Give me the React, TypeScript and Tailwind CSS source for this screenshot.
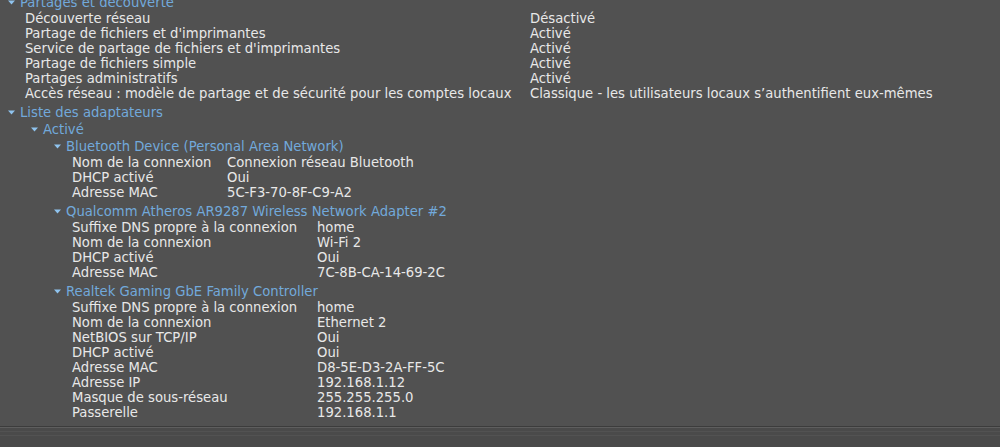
import React from "react";

const Arrow = () => (
  <svg width="7" height="5" viewBox="0 0 7 5" className="shrink-0">
    <path d="M0 0.5 L7 0.5 L3.5 4.5 Z" fill="#8fc3ee" />
  </svg>
);

const Header = ({ indent, text, gapTop }: { indent: string; text: string; gapTop?: boolean }) => (
  <div className={`flex items-center h-[17px] ${indent} ${gapTop ? "mt-[3px]" : ""}`}>
    <Arrow />
    <span className="text-[#72a9db] ml-[5px] whitespace-nowrap">{text}</span>
  </div>
);

const KV = ({ rows, indent, keyW }: { rows: [string, string][]; indent: string; keyW: string }) => (
  <div className={indent}>
    {rows.map(([k, v], i) => (
      <div key={i} className="flex h-[15px] items-center">
        <span className={`${keyW} shrink-0 whitespace-nowrap`}>{k}</span>
        <span className="whitespace-nowrap">{v}</span>
      </div>
    ))}
  </div>
);

export default function App() {
  return (
    <div
      className="w-[1000px] h-[447px] bg-[#515151] text-[#e8e8e8] overflow-hidden flex flex-col text-[13.2px] leading-[15px]"
      style={{ fontFamily: '"DejaVu Sans", Verdana, sans-serif' }}
    >
      <div className="flex-1 min-h-0 -mt-[6px]">
        <Header indent="pl-[8px]" text="Partages et découverte" />
        <KV
          indent="pl-[25px]"
          keyW="w-[505px]"
          rows={[
            ["Découverte réseau", "Désactivé"],
            ["Partage de fichiers et d'imprimantes", "Activé"],
            ["Service de partage de fichiers et d'imprimantes", "Activé"],
            ["Partage de fichiers simple", "Activé"],
            ["Partages administratifs", "Activé"],
            ["Accès réseau : modèle de partage et de sécurité pour les comptes locaux", "Classique - les utilisateurs locaux s’authentifient eux-mêmes"],
          ]}
        />
        <Header indent="pl-[8px]" text="Liste des adaptateurs" gapTop />
        <Header indent="pl-[31px]" text="Activé" />
        <Header indent="pl-[54px]" text="Bluetooth Device (Personal Area Network)" />
        <KV
          indent="pl-[72px]"
          keyW="w-[155px]"
          rows={[
            ["Nom de la connexion", "Connexion réseau Bluetooth"],
            ["DHCP activé", "Oui"],
            ["Adresse MAC", "5C-F3-70-8F-C9-A2"],
          ]}
        />
        <Header indent="pl-[54px]" text="Qualcomm Atheros AR9287 Wireless Network Adapter #2" gapTop />
        <KV
          indent="pl-[72px]"
          keyW="w-[245px]"
          rows={[
            ["Suffixe DNS propre à la connexion", "home"],
            ["Nom de la connexion", "Wi-Fi 2"],
            ["DHCP activé", "Oui"],
            ["Adresse MAC", "7C-8B-CA-14-69-2C"],
          ]}
        />
        <Header indent="pl-[54px]" text="Realtek Gaming GbE Family Controller" gapTop />
        <KV
          indent="pl-[72px]"
          keyW="w-[245px]"
          rows={[
            ["Suffixe DNS propre à la connexion", "home"],
            ["Nom de la connexion", "Ethernet 2"],
            ["NetBIOS sur TCP/IP", "Oui"],
            ["DHCP activé", "Oui"],
            ["Adresse MAC", "D8-5E-D3-2A-FF-5C"],
            ["Adresse IP", "192.168.1.12"],
            ["Masque de sous-réseau", "255.255.255.0"],
            ["Passerelle", "192.168.1.1"],
          ]}
        />
      </div>
      <div className="h-[21px] shrink-0 border-t border-[#3c3c3c] bg-[#4a4a4a] flex flex-col">
        <div className="h-[1px] bg-[#5e5e5e]" />
        <div className="h-[3px]" />
        <div className="h-[1px] bg-[#525252]" />
        <div className="h-[3px]" />
        <div className="h-[1px] bg-[#525252]" />
      </div>
    </div>
  );
}
